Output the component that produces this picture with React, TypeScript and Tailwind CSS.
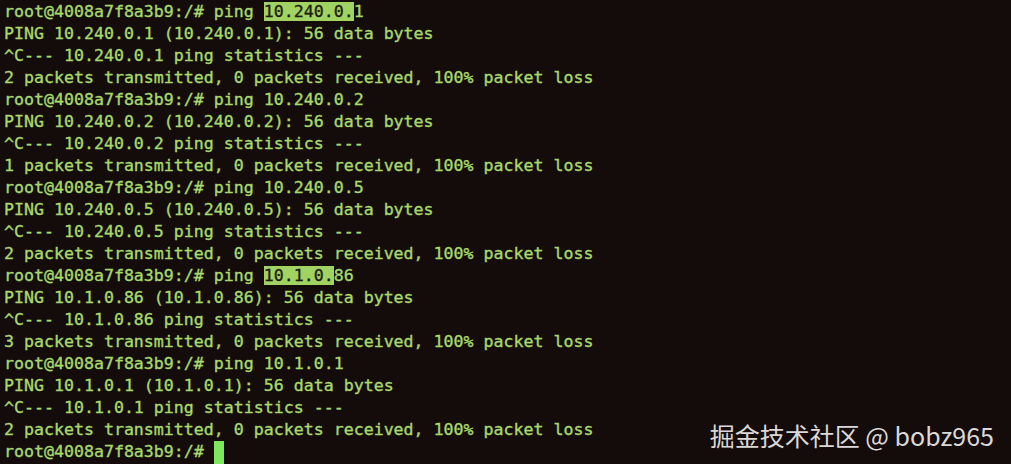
const lines: { text: string; hl?: [number, number] }[] = [
  { text: "root@4008a7f8a3b9:/# ping 10.240.0.1", hl: [26, 35] },
  { text: "PING 10.240.0.1 (10.240.0.1): 56 data bytes" },
  { text: "^C--- 10.240.0.1 ping statistics ---" },
  { text: "2 packets transmitted, 0 packets received, 100% packet loss" },
  { text: "root@4008a7f8a3b9:/# ping 10.240.0.2" },
  { text: "PING 10.240.0.2 (10.240.0.2): 56 data bytes" },
  { text: "^C--- 10.240.0.2 ping statistics ---" },
  { text: "1 packets transmitted, 0 packets received, 100% packet loss" },
  { text: "root@4008a7f8a3b9:/# ping 10.240.0.5" },
  { text: "PING 10.240.0.5 (10.240.0.5): 56 data bytes" },
  { text: "^C--- 10.240.0.5 ping statistics ---" },
  { text: "2 packets transmitted, 0 packets received, 100% packet loss" },
  { text: "root@4008a7f8a3b9:/# ping 10.1.0.86", hl: [26, 33] },
  { text: "PING 10.1.0.86 (10.1.0.86): 56 data bytes" },
  { text: "^C--- 10.1.0.86 ping statistics ---" },
  { text: "3 packets transmitted, 0 packets received, 100% packet loss" },
  { text: "root@4008a7f8a3b9:/# ping 10.1.0.1" },
  { text: "PING 10.1.0.1 (10.1.0.1): 56 data bytes" },
  { text: "^C--- 10.1.0.1 ping statistics ---" },
  { text: "2 packets transmitted, 0 packets received, 100% packet loss" },
];

function Line({ text, hl }: { text: string; hl?: [number, number] }) {
  if (!hl) return <div className="h-[22px] whitespace-pre">{text}</div>;
  return (
    <div className="h-[22px] whitespace-pre">
      {text.slice(0, hl[0])}
      <span className="bg-[#a0d361] text-[#1a1a10] [-webkit-text-stroke:0.3px_#1a1a10]">
        {text.slice(hl[0], hl[1])}
      </span>
      {text.slice(hl[1])}
    </div>
  );
}

export default function App() {
  return (
    <div className="relative h-[464px] w-[1011px] overflow-hidden bg-[#140c0a]">
      <div className="pt-[1px] pl-[4px] font-['DejaVu_Sans_Mono',monospace] text-[16.6px] leading-[22px] text-[#a8d96c] [-webkit-text-stroke:0.35px_#a8d96c]">
        {lines.map((l, i) => (
          <Line key={i} {...l} />
        ))}
        <div className="flex h-[22px] items-center whitespace-pre">
          root@4008a7f8a3b9:/#{" "}
          <span className="mt-[2px] inline-block h-[24px] w-[10px] bg-[#7ee85c] [-webkit-text-stroke:0]" />
        </div>
      </div>
      <div className="absolute right-[17px] bottom-[14px] font-['Noto_Sans_CJK_SC','Noto_Sans',sans-serif] text-[25px] leading-[30px] text-[#dcd8d6]">
        掘金技术社区 @ bobz965
      </div>
    </div>
  );
}
